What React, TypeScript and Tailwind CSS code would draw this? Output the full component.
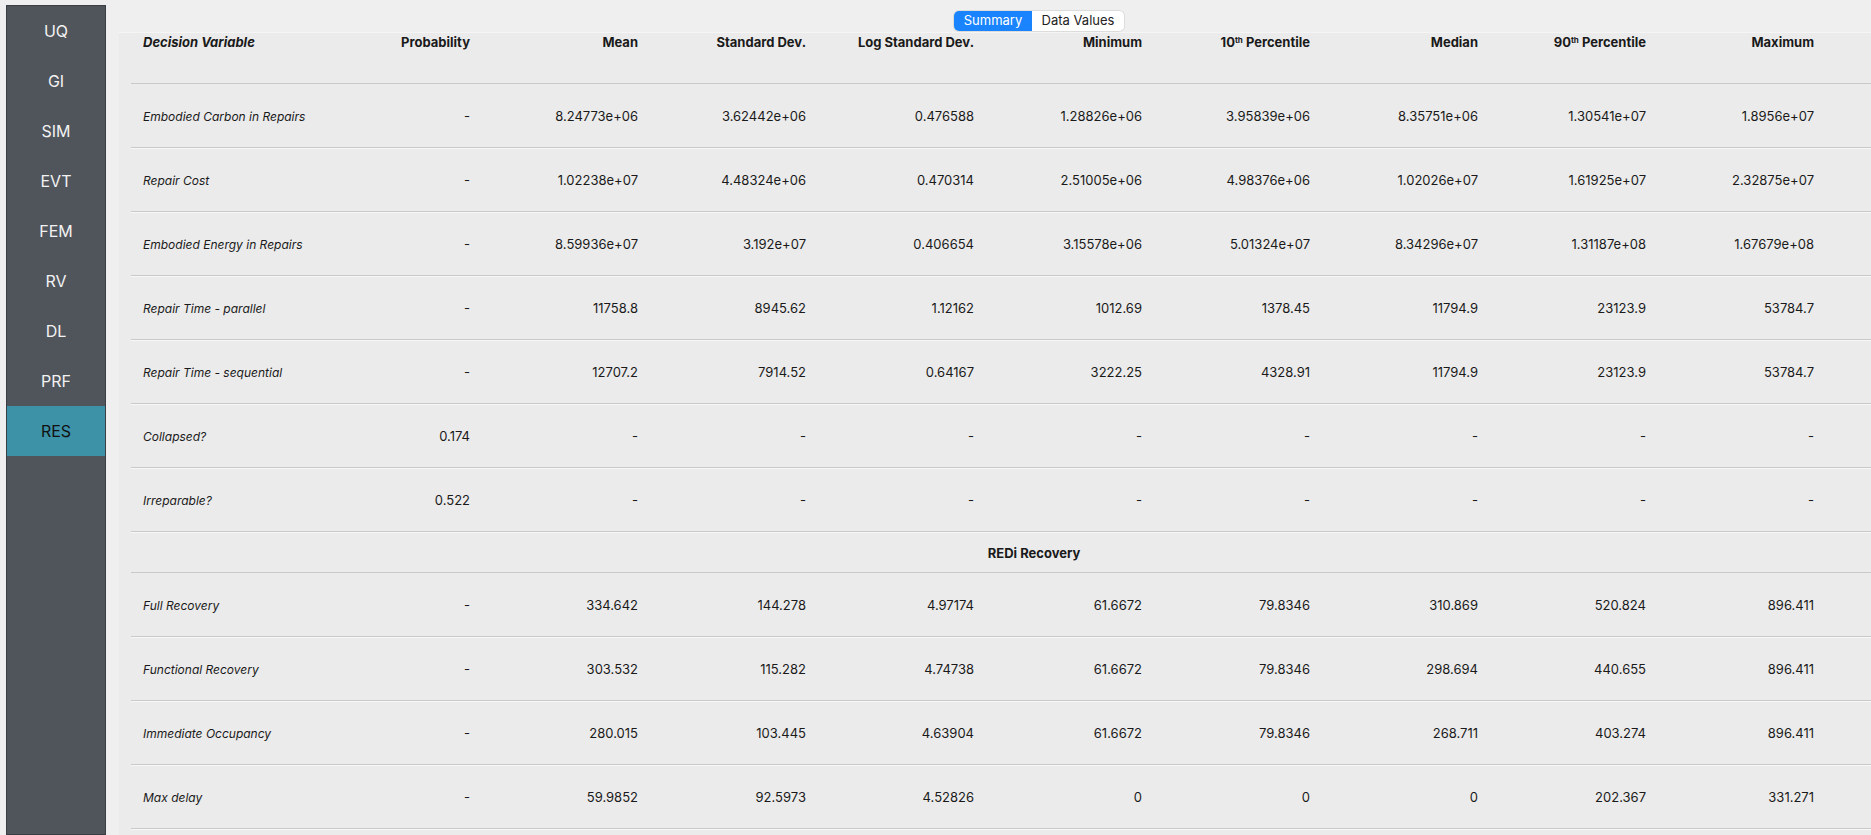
import React from "react";

const navItems = ["UQ", "GI", "SIM", "EVT", "FEM", "RV", "DL", "PRF", "RES"];

type Row = { name: string; values: string[] };

const topRows: Row[] = [
  { name: "Embodied Carbon in Repairs", values: ["-", "8.24773e+06", "3.62442e+06", "0.476588", "1.28826e+06", "3.95839e+06", "8.35751e+06", "1.30541e+07", "1.8956e+07"] },
  { name: "Repair Cost", values: ["-", "1.02238e+07", "4.48324e+06", "0.470314", "2.51005e+06", "4.98376e+06", "1.02026e+07", "1.61925e+07", "2.32875e+07"] },
  { name: "Embodied Energy in Repairs", values: ["-", "8.59936e+07", "3.192e+07", "0.406654", "3.15578e+06", "5.01324e+07", "8.34296e+07", "1.31187e+08", "1.67679e+08"] },
  { name: "Repair Time - parallel", values: ["-", "11758.8", "8945.62", "1.12162", "1012.69", "1378.45", "11794.9", "23123.9", "53784.7"] },
  { name: "Repair Time - sequential", values: ["-", "12707.2", "7914.52", "0.64167", "3222.25", "4328.91", "11794.9", "23123.9", "53784.7"] },
  { name: "Collapsed?", values: ["0.174", "-", "-", "-", "-", "-", "-", "-", "-"] },
  { name: "Irreparable?", values: ["0.522", "-", "-", "-", "-", "-", "-", "-", "-"] },
];

const recoveryRows: Row[] = [
  { name: "Full Recovery", values: ["-", "334.642", "144.278", "4.97174", "61.6672", "79.8346", "310.869", "520.824", "896.411"] },
  { name: "Functional Recovery", values: ["-", "303.532", "115.282", "4.74738", "61.6672", "79.8346", "298.694", "440.655", "896.411"] },
  { name: "Immediate Occupancy", values: ["-", "280.015", "103.445", "4.63904", "61.6672", "79.8346", "268.711", "403.274", "896.411"] },
  { name: "Max delay", values: ["-", "59.9852", "92.5973", "4.52826", "0", "0", "0", "202.367", "331.271"] },
  { name: "", values: ["", "", "", "", "", "", "", "", ""] },
];

function DataRow({ row }: { row: Row }) {
  return (
    <div className="flex h-[64px] items-center border-b border-[#c9c9c9] pt-[3px] shadow-[0_1px_0_#f7f7f7]">
      <div className="w-[171px] shrink-0 whitespace-nowrap pl-3 text-[12px] italic">{row.name}</div>
      {row.values.map((v, i) => (
        <div key={i} className="w-[168px] shrink-0 text-right">
          {v}
        </div>
      ))}
    </div>
  );
}

function Pct({ n }: { n: string }) {
  return (
    <span>
      {n}
      <sup className="text-[8px] font-bold">th</sup> Percentile
    </span>
  );
}

export default function App() {
  const headers: React.ReactNode[] = [
    "Probability",
    "Mean",
    "Standard Dev.",
    "Log Standard Dev.",
    "Minimum",
    <Pct n="10" key="p10" />,
    "Median",
    <Pct n="90" key="p90" />,
    "Maximum",
  ];

  return (
    <div className="flex h-[835px] w-full overflow-hidden bg-[#efefef] font-['Inter','Liberation_Sans',sans-serif] text-[13px] text-[#1a1a1a]">
      {/* Sidebar */}
      <div className="ml-[6px] mt-[5px] flex w-[100px] shrink-0 flex-col border border-[#3b3e43] bg-[#50545b]">
        {navItems.map((item) => (
          <div
            key={item}
            className={`flex h-[50px] items-center justify-center text-[16px] ${
              item === "RES" ? "bg-[#3d92a8] text-[#111]" : "text-[#f2f2f2]"
            }`}
          >
            {item}
          </div>
        ))}
      </div>

      {/* Results */}
      <div className="ml-[13px] flex min-w-0 flex-1 flex-col pt-[11px]">
        <div className="ml-[835px] flex h-[20px] w-[170px] overflow-hidden rounded-[5px] text-[13px] shadow-[0_0_0_1px_#dcdcdc]">
          <div className="flex w-[78px] items-center justify-center bg-[#1a84ff] text-white">Summary</div>
          <div className="flex flex-1 items-center justify-center bg-white text-[#222]">Data Values</div>
        </div>

        <div className="mt-[1px] flex-1 overflow-hidden border-t border-[#f5f5f5] bg-[#ebebeb] pl-[12px]">
          <div className="w-[1806px]">
            {/* Header */}
            <div className="flex h-[51px] items-start border-b border-[#c9c9c9] font-bold">
              <div className="w-[171px] shrink-0 whitespace-nowrap pl-3 italic">Decision Variable</div>
              {headers.map((h, i) => (
                <div key={i} className="w-[168px] shrink-0 whitespace-nowrap text-right">
                  {h}
                </div>
              ))}
            </div>

            {topRows.map((r) => (
              <DataRow key={r.name} row={r} />
            ))}

            <div className="flex h-[41px] items-center justify-center border-b border-[#c9c9c9] pt-[3px] font-bold">
              REDi Recovery
            </div>

            {recoveryRows.map((r, i) => (
              <DataRow key={i} row={r} />
            ))}
          </div>
        </div>
      </div>
    </div>
  );
}
